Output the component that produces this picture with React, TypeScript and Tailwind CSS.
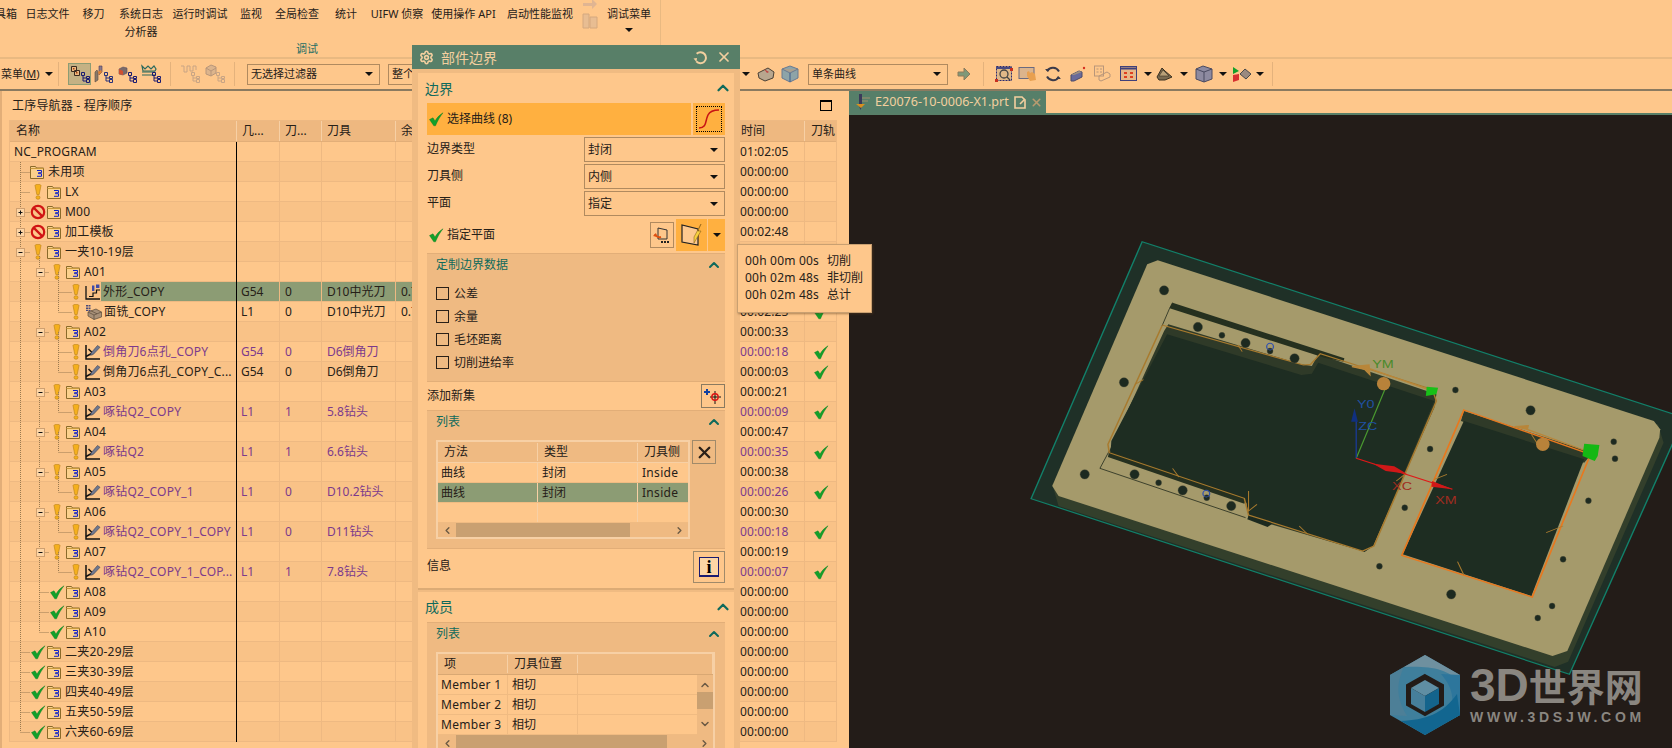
import React from "react";
import { ChevronUp, ChevronLeft, ChevronRight, ChevronDown, X, Settings } from "lucide-react";

const Folder = () => (
  <svg width="14" height="15" viewBox="0 0 14 15" className="shrink-0">
    <path d="M.5 2.5h5l1 1.5h7v10.5H.5z" fill="#fbd08c" stroke="#8a6a2a" />
    <path d="M.5 4.5h13" stroke="#c89a3c" />
    <path d="M7 6.5h4.5v2.2H8.5v1h3v2.6H7" fill="none" stroke="#1020c8" />
  </svg>
);
const Bang = () => (
  <svg width="16" height="16" viewBox="0 0 16 16" className="shrink-0">
    <path d="M5 1.5C5 0 11 0 11 1.5L9.2 10.5H6.8z" fill="#f5b01e" stroke="#b88010" strokeWidth=".6" />
    <ellipse cx="8" cy="13.5" rx="2" ry="1.8" fill="#f5b01e" stroke="#b88010" strokeWidth=".6" />
  </svg>
);
const Check = () => (
  <svg width="16" height="16" viewBox="0 0 16 16" className="shrink-0">
    <path d="M1.5 8.5 5 6.8l2 3.2C9 6.5 11.5 4 15 1.8 12 5.5 9.5 10 7.5 14.8H5.8z" fill="#12a02a" stroke="#0a7a1e" strokeWidth=".4" />
  </svg>
);
const NoEntry = () => (
  <svg width="16" height="16" viewBox="0 0 16 16" className="shrink-0">
    <circle cx="8" cy="8" r="6.2" fill="none" stroke="#d01414" strokeWidth="2.2" />
    <path d="M3.6 3.6l8.8 8.8" stroke="#d01414" strokeWidth="2.2" />
  </svg>
);
const OpEdit = () => (
  <svg width="16" height="16" viewBox="0 0 16 16" className="shrink-0">
    <path d="M1 1v14h14" fill="none" stroke="#111" strokeWidth="1.5" />
    <path d="M1 12.5 7.5 9 3.5 5" fill="none" stroke="#111" strokeWidth="1.5" />
    <path d="M6 9 12.5 1.5l2.5 1.8L8.2 10.5l-2.6.8z" fill="#6f7890" stroke="#3a3f50" strokeWidth=".6" />
  </svg>
);
const OpProfile = () => (
  <svg width="16" height="16" viewBox="0 0 16 16" className="shrink-0">
    <path d="M1 2v13h14" fill="none" stroke="#111" strokeWidth="1.3" />
    <path d="M4 12.5h4V9h3.5V6H15" fill="none" stroke="#111" strokeWidth="1.2" />
    <path d="M7 1.5h2.4v5.5H7zM11 .5h3.4v3.5H11z" fill="#3d4aa8" />
  </svg>
);
const OpFace = () => (
  <svg width="17" height="16" viewBox="0 0 17 16" className="shrink-0">
    <path d="M3 8l8-3 5.5 3v5L9 15.5 3 12z" fill="#a89078" stroke="#5a4a3a" strokeWidth=".7" />
    <path d="M3 8l6 3 7.5-3M9 11v4.5M6 6.8l6 3" fill="none" stroke="#5a4a3a" strokeWidth=".7" />
    <path d="M2 1v6M4.5 1v6" stroke="#4a4a7a" strokeWidth="2" strokeDasharray="1.6 .8" />
  </svg>
);

type Row = { n: string; l: number; s?: string; i: string; box?: string; g?: string; d?: string; t?: string; r?: string; time: string; p?: boolean; c?: boolean; sel?: boolean };
const rows: Row[] = [
  { n: "NC_PROGRAM", l: 0, i: "", time: "01:02:05" },
  { n: "未用项", l: 1, i: "f", time: "00:00:00" },
  { n: "LX", l: 1, s: "b", i: "f", time: "00:00:00" },
  { n: "M00", l: 1, s: "n", i: "f", box: "+", time: "00:00:00" },
  { n: "加工模板", l: 1, s: "n", i: "f", box: "+", time: "00:02:48" },
  { n: "一夹10-19层", l: 1, s: "b", i: "f", box: "-", time: "" },
  { n: "A01", l: 2, s: "b", i: "f", box: "-", time: "" },
  { n: "外形_COPY", l: 3, s: "b", i: "p", g: "G54", d: "0", t: "D10中光刀", r: "0.7", time: "", sel: true },
  { n: "面铣_COPY", l: 3, s: "b", i: "m", g: "L1", d: "0", t: "D10中光刀", r: "0.7", time: "00:02:23", c: true },
  { n: "A02", l: 2, s: "b", i: "f", box: "-", time: "00:00:33" },
  { n: "倒角刀6点孔_COPY", l: 3, s: "b", i: "e", g: "G54", d: "0", t: "D6倒角刀", time: "00:00:18", p: true, c: true },
  { n: "倒角刀6点孔_COPY_C...", l: 3, s: "b", i: "e", g: "G54", d: "0", t: "D6倒角刀", time: "00:00:03", c: true },
  { n: "A03", l: 2, s: "b", i: "f", box: "-", time: "00:00:21" },
  { n: "啄钻Q2_COPY", l: 3, s: "b", i: "e", g: "L1", d: "1", t: "5.8钻头", time: "00:00:09", p: true, c: true },
  { n: "A04", l: 2, s: "b", i: "f", box: "-", time: "00:00:47" },
  { n: "啄钻Q2", l: 3, s: "b", i: "e", g: "L1", d: "1", t: "6.6钻头", time: "00:00:35", p: true, c: true },
  { n: "A05", l: 2, s: "b", i: "f", box: "-", time: "00:00:38" },
  { n: "啄钻Q2_COPY_1", l: 3, s: "b", i: "e", g: "L1", d: "0", t: "D10.2钻头", time: "00:00:26", p: true, c: true },
  { n: "A06", l: 2, s: "b", i: "f", box: "-", time: "00:00:30" },
  { n: "啄钻Q2_COPY_1_COPY", l: 3, s: "b", i: "e", g: "L1", d: "0", t: "D11钻头", time: "00:00:18", p: true, c: true },
  { n: "A07", l: 2, s: "b", i: "f", box: "-", time: "00:00:19" },
  { n: "啄钻Q2_COPY_1_COP...", l: 3, s: "b", i: "e", g: "L1", d: "1", t: "7.8钻头", time: "00:00:07", p: true, c: true },
  { n: "A08", l: 2, s: "c", i: "f", time: "00:00:00" },
  { n: "A09", l: 2, s: "c", i: "f", time: "00:00:00" },
  { n: "A10", l: 2, s: "c", i: "f", time: "00:00:00" },
  { n: "二夹20-29层", l: 1, s: "c", i: "f", time: "00:00:00" },
  { n: "三夹30-39层", l: 1, s: "c", i: "f", time: "00:00:00" },
  { n: "四夹40-49层", l: 1, s: "c", i: "f", time: "00:00:00" },
  { n: "五夹50-59层", l: 1, s: "c", i: "f", time: "00:00:00" },
  { n: "六夹60-69层", l: 1, s: "c", i: "f", time: "00:00:00" },
];

const pad = ["pl-[4px]", "pl-[20px]", "pl-[39px]", "pl-[58px]"];

function TreeLines() {
  const cy = (i: number) => 10 + i * 20;
  const dot = "#9a7a50";
  const nodes: React.ReactNode[] = [];
  const xs = [0, 10.5, 29.5, 48.5];
  rows.forEach((r, i) => {
    if (r.l === 0) return;
    const end = r.l === 1 ? 20 : r.l === 2 ? 39 : 62;
    nodes.push(<line key={"h" + i} x1={xs[r.l]} x2={end} y1={cy(i) + 0.5} y2={cy(i) + 0.5} stroke={dot} strokeDasharray="1 1" />);
    if (r.l === 3) {
      let p = i;
      while (rows[p].l !== 2) p--;
      nodes.push(<line key={"v" + i} x1={48.5} x2={48.5} y1={cy(p)} y2={cy(i)} stroke={dot} strokeDasharray="1 1" />);
    }
  });
  rows.forEach((r, i) => {
    if (!r.box) return;
    const x = r.l === 1 ? 6 : 26;
    nodes.push(
      <g key={"b" + i}>
        <rect x={x + 0.5} y={cy(i) - 3.5} width="8" height="8" fill="#fdd5a5" stroke="#cfa070" />
        <path d={`M${x + 2.5} ${cy(i) + 0.5}h4` + (r.box === "+" ? `M${x + 4.5} ${cy(i) - 1.5}v4` : "")} stroke="#111" />
      </g>
    );
  });
  return (
    <svg width="227" height="620" className="absolute left-0 top-0 pointer-events-none">
      <line x1="10.5" x2="10.5" y1="20" y2={cy(29)} stroke={dot} strokeDasharray="1 1" />
      <line x1="29.5" x2="29.5" y1={cy(5) + 4} y2={cy(24)} stroke={dot} strokeDasharray="1 1" />
      {nodes}
    </svg>
  );
}

function Tree() {
  return (
    <div className="relative">
      <TreeLines />
      <div className="absolute left-[226px] top-0 bottom-0 w-[1px] bg-black z-10" />
      {rows.map((r, i) => {
        const col = r.p ? "text-[#7c3a8c]" : "text-[#262018]";
        const bg = i % 2 ? "bg-[#f9c287]" : "bg-[#fec78b]";
        const sel = r.sel ? "bg-[#8c9c74]" : "";
        return (
          <div key={i} className={`flex h-5 border-b border-[#eeb982] ${bg}`}>
            <div className={`w-[227px] shrink-0 flex items-center ${pad[r.l]}`}>
              {r.s === "b" && <span className="mr-[1px] flex"><Bang /></span>}
              {r.s === "n" && <span className="mr-[1px] flex"><NoEntry /></span>}
              {r.s === "c" && <span className="mr-[1px] flex"><Check /></span>}
              {r.i === "f" && <span className="mr-[4px] flex"><Folder /></span>}
              {r.i === "e" && <span className="flex"><OpEdit /></span>}
              {r.i === "p" && <span className="flex"><OpProfile /></span>}
              {r.i === "m" && <span className="flex"><OpFace /></span>}
              <span className={`flex-1 h-[19px] leading-[19px] whitespace-nowrap tracking-[0.2px] ${r.i !== "f" && r.l === 3 ? "pl-[2px]" : ""} ${col} ${sel}`}>{r.n}</span>
            </div>
            <div className={`w-[43px] shrink-0 border-r border-[#eeb982] pl-[4px] leading-[19px] ${col} ${sel}`}>{r.g}</div>
            <div className={`w-[42px] shrink-0 border-r border-[#eeb982] pl-[5px] leading-[19px] ${col} ${sel}`}>{r.d}</div>
            <div className={`w-[74px] shrink-0 border-r border-[#eeb982] pl-[5px] leading-[19px] whitespace-nowrap ${col} ${sel}`}>{r.t}</div>
            <div className={`w-[60px] shrink-0 border-r border-[#eeb982] pl-[5px] leading-[19px] ${col} ${sel}`}>{r.r}</div>
            <div className={`flex-1 border-r border-[#eeb982] ${sel}`} />
            <div className={`w-[70px] shrink-0 border-r border-[#eeb982] pl-[5px] tracking-[0.1px] leading-[19px] ${col} ${sel}`}>{r.time}</div>
            <div className={`w-[31px] shrink-0 flex items-center justify-center ${sel}`}>{r.c && <Check />}</div>
          </div>
        );
      })}
    </div>
  );
}

const TriDown = () => <span className="inline-block w-0 h-0 border-l-[4px] border-r-[4px] border-t-[4px] border-l-transparent border-r-transparent border-t-[#111]" />;

const Sel = ({ text, w, h = "h-[21px]" }: { text: string; w: string; h?: string }) => (
  <div className={`${w} ${h} shrink-0 border border-[#b08a5f] flex items-center justify-between pl-[3px] pr-[6px] text-[#262018] whitespace-nowrap overflow-hidden`}>
    <span>{text}</span>
    <TriDown />
  </div>
);

const Sep = ({ m }: { m: string }) => <div className={`w-[1px] h-6 bg-[#e4b27c] shrink-0 ${m}`} />;

const TB = ({ children, m = "" }: { children: React.ReactNode; m?: string }) => (
  <div className={`w-6 h-6 shrink-0 flex items-center justify-center ${m}`}>{children}</div>
);

const Branch = ({ c = "#1a1a70" }: { c?: string }) => (
  <path d="M11.5 8.5h3v3h-3zM16.5 15.5h3v3h-3zM13 11.5v5.5h3.5M13 14h3.5M16.5 12.5h3v2h-3z" fill="none" stroke={c} />
);

function Toolbar() {
  return (
    <div className="flex items-center h-[32px] border-b-2 border-[#8a7a60] text-[11px] text-[#262018]">
      <div className="w-[741px] shrink-0 flex items-center">
        <span className="ml-[1px] w-[42px] whitespace-nowrap">菜单(<span className="underline">M</span>)</span>
        <span className="ml-[2px] flex"><TriDown /></span>
        <Sep m="ml-[5px]" />
        <div className="ml-[9px] w-[23px] h-[22px] bg-[#c4b184] border border-[#8c9c74] flex items-center justify-center">
          <svg width="20" height="20" viewBox="0 0 20 20"><path d="M1.5 2.5h5v5h-5zM4.5 6.5h5v5h-5z" fill="#eeb880" stroke="#3a2a20" /><rect x="3" y="4" width="1.5" height="1.5" fill="#a04010" /><rect x="6" y="8" width="1.5" height="1.5" fill="#a04010" /><Branch /></svg>
        </div>
        <TB><svg width="20" height="20" viewBox="0 0 20 20"><path d="M2 8l2-2 1 2v8l-3 2z" fill="#8a7a6a" stroke="#5a4a40" strokeWidth=".6" /><path d="M6 2h3v6l-3 3z" fill="#8a7a8a" stroke="#4a3a5a" strokeWidth=".6" /><path d="M5 8l3-2 1 2-3 3z" fill="#e08030" /><Branch c="#27307a" /></svg></TB>
        <TB><svg width="20" height="20" viewBox="0 0 20 20"><path d="M2 5l4-2 4 1v5l-4 2-4-1z" fill="#7a6a6a" stroke="#5a5060" strokeWidth=".6" /><path d="M2 5l4 2v4l-4-1z" fill="#d05030" /><Branch /></svg></TB>
        <TB><svg width="20" height="20" viewBox="0 0 20 20"><path d="M1 2l3 3 3-3 3 3 3-3 2 3-1 2H2z" fill="none" stroke="#2d6a5e" strokeWidth="1.2" /><path d="M1 8h13M1 11h13" stroke="#2d6a5e" strokeWidth="1.2" /><Branch /></svg></TB>
        <Sep m="ml-[7px]" />
        <TB m="ml-[7px]"><svg width="20" height="20" viewBox="0 0 20 20"><path d="M1 2h3v6h3V2h3v5h3V2h3v4" fill="none" stroke="#c8a484" /><Branch c="#c8a484" /></svg></TB>
        <TB m="ml-[1px]"><svg width="20" height="20" viewBox="0 0 20 20"><path d="M1 4l5-3 5 2v6l-5 3-5-2z" fill="#dcb48c" stroke="#b8967a" /><path d="M1 4l5 3 5-3M6 7v5" fill="none" stroke="#b8967a" /><Branch c="#c8a484" /></svg></TB>
        <Sep m="ml-[7px]" />
        <div className="ml-[12px]"><Sel text="无选择过滤器" w="w-[133px]" /></div>
        <div className="ml-[8px]"><Sel text="整个装配" w="w-[100px]" /></div>
      </div>
      <div className="flex items-center">
        <span className="ml-[1px] flex"><TriDown /></span>
        <TB m="ml-[4px]"><svg width="18" height="16" viewBox="0 0 18 16"><path d="M1 7l10-5 6 4-1 6-8 3-6-3z" fill="#b8a68e" stroke="#4a4035" /><path d="M7 3l5 3-2 1z" fill="#c04040" /></svg></TB>
        <TB><svg width="18" height="18" viewBox="0 0 18 18"><path d="M9 1l8 3v9l-8 4-8-4V4z" fill="#8ea4a8" stroke="#6a7a90" /><path d="M1 4l8 4 8-4" fill="#a8a090" stroke="#6a7a90" /><path d="M9 8v9" stroke="#3a5a8a" /></svg></TB>
        <div className="ml-[6px]"><Sel text="单条曲线" w="w-[140px]" /></div>
        <div className="ml-[6px] w-5 flex justify-center"><svg width="14" height="14" viewBox="0 0 14 14"><path d="M1 5h6V1l6 6-6 6V9H1z" fill="#7f9878" stroke="#8c7a5c" /></svg></div>
        <Sep m="ml-[9px]" />
        <TB m="ml-[8px]"><svg width="18" height="18" viewBox="0 0 18 18"><rect x="1.5" y="1.5" width="15" height="14" fill="#e0b888" stroke="#2a2a70" strokeDasharray="2 1" /><path d="M1 2h16v2H1z" fill="#4a4a80" /><circle cx="9" cy="9" r="4" fill="none" stroke="#444" strokeWidth="1.3" /><path d="M12 12l3 3" stroke="#444" strokeWidth="1.3" /><rect x="0" y="14" width="3" height="3" fill="#c83020" /><rect x="15" y="3" width="3" height="3" fill="#c83020" /></svg></TB>
        <TB><svg width="20" height="16" viewBox="0 0 20 16"><rect x="1" y="1.5" width="15" height="11" fill="#dcb48c" stroke="#6a6a80" /><path d="M9 6l2-1 1 2 2-1 3 2 1 6-6 1-3-5z" fill="#e8a050" /></svg></TB>
        <TB m="ml-[1px]"><svg width="18" height="18" viewBox="0 0 18 18"><path d="M15 6.5A7 7 0 0 0 3 6M3 11.5a7 7 0 0 0 12 .5" fill="none" stroke="#3a3a4a" strokeWidth="2" /><path d="M1 4l3 3 2-3zM17 14l-3-3-2 3z" fill="#3a3a4a" /></svg></TB>
        <TB m="ml-[1px]"><svg width="18" height="16" viewBox="0 0 18 16"><path d="M2 9l8-4 3 1v5l-8 4H2z" fill="#6a6a9a" stroke="#4a4a6a" /><path d="M10 5l3 1-8 3-3 0z" fill="#a09080" /><circle cx="15" cy="2" r="1.2" fill="#d83020" /></svg></TB>
        <TB><svg width="18" height="18" viewBox="0 0 18 18"><rect x="1.5" y="1" width="9" height="10" fill="none" stroke="#b8967a" /><path d="M3.5 4h2M3.5 7h2M7 4h2M7 7h2" stroke="#b8967a" /><path d="M6 11l8-4 3 2v3l-9 4-2-1z" fill="none" stroke="#b8967a" /></svg></TB>
        <TB m="ml-[3px]"><svg width="18" height="16" viewBox="0 0 18 16"><rect x=".5" y=".5" width="16" height="14" fill="#e8b888" stroke="#40407a" /><path d="M.5 2.5h16" stroke="#40407a" strokeWidth="2" /><path d="M4 6h3v2H4zM10 6h3v2h-3zM4 10h3v2H4zM10 10h3v2h-3z" fill="#e04020" /></svg></TB>
        <span className="ml-[1px] w-[11px] flex justify-center"><TriDown /></span>
        <TB><svg width="18" height="16" viewBox="0 0 18 16"><path d="M1 11l5-9 3 3 7 6-7 3-6 0z" fill="#7a6a50" stroke="#3a3020" /><path d="M3 10l4-6 6 6z" fill="#b8a078" stroke="#3a3020" strokeWidth=".6" /></svg></TB>
        <span className="ml-[1px] w-[11px] flex justify-center"><TriDown /></span>
        <TB m="ml-[3px]"><svg width="18" height="18" viewBox="0 0 18 18"><path d="M1 4l7-3 9 3v10l-8 3-8-3z" fill="#8d8aa0" stroke="#4a4a60" /><path d="M1 4l8 3 8-3M9 7v10" fill="none" stroke="#4a4a60" /></svg></TB>
        <span className="ml-[1px] w-[11px] flex justify-center"><TriDown /></span>
        <TB m="ml-[2px]"><svg width="20" height="18" viewBox="0 0 20 18"><path d="M1 2l6 4-6 3z" fill="#14a02a" /><path d="M1 10l6-1v6l-6 2z" fill="#d83030" /><path d="M8 9l5-5 6 5-5 5z" fill="#9a8a80" stroke="#4a4a4a" /></svg></TB>
        <span className="w-[11px] flex justify-center"><TriDown /></span>
        <Sep m="ml-[7px]" />
      </div>
    </div>
  );
}

function Ribbon() {
  const items: [string, string, string?][] = [
    ["w-[61px]", "日志文件"],
    ["w-[31px]", "移刀"],
    ["w-[64px]", "系统日志", "分析器"],
    ["w-[54px]", "运行时调试"],
    ["w-[48px]", "监视"],
    ["w-[44px]", "全局检查"],
    ["w-[54px]", "统计"],
    ["w-[48px]", "UIFW 侦察"],
  ];
  return (
    <div className="h-[59px] border-b-2 border-[#e9b981] flex text-[11px] text-[#262018]">
      <div className="w-[661px] border-r border-[#e9b981] shrink-0 flex flex-col">
        <div className="flex h-[44px] pt-[5px] leading-[18px] whitespace-nowrap">
          <div className="w-[17px] flex justify-end overflow-hidden"><span>工具箱</span></div>
          {items.map(([w, a, b], i) => (
            <div key={i} className={`${w} shrink-0 flex flex-col items-center`}>
              <span>{a}</span>
              {b && <span>{b}</span>}
            </div>
          ))}
          <div className="w-[77px] ml-[4px] text-center">使用操作 API</div>
          <div className="w-[72px] ml-[2px] text-center">启动性能监视</div>
          <div className="w-[28px] flex flex-col items-center -mt-[6px] gap-[1px]">
            <svg width="16" height="12" viewBox="0 0 16 12"><path d="M1 4h9V0l5 5-5 5V7H1z" fill="#e0b592" /></svg>
            <svg width="16" height="17" viewBox="0 0 16 17"><path d="M1 2h6v14H1zM8 5h7v11H8z" fill="#e8bd92" stroke="#d4a87e" /></svg>
          </div>
          <div className="w-[48px] ml-[1px] flex flex-col items-center">
            <span>调试菜单</span>
            <span className="mt-[5px] flex"><TriDown /></span>
          </div>
        </div>
        <div className="w-[614px] text-center text-[#1f6e64] leading-[12px] -mt-[1px]">调试</div>
      </div>
    </div>
  );
}

const GroupHead = ({ t }: { t: string }) => (
  <div className="flex items-center justify-between h-[22px] pl-[9px] pr-[3px] text-[#0f6a5c]">
    <span>{t}</span>
    <ChevronUp size={16} strokeWidth={3} className="text-[#0f6a5c]" />
  </div>
);

const Cb = ({ t }: { t: string }) => (
  <div className="flex items-center h-[23px] pl-[9px] gap-[5px] text-[#262018]">
    <span className="w-[13px] h-[13px] border border-[#2a2018]" />
    <span>{t}</span>
  </div>
);

const DRow = ({ label, val }: { label: string; val: string }) => (
  <div className="flex items-center justify-between h-[27px] pl-[9px] pr-[9px]">
    <span className="-mt-[1px]">{label}</span>
    <Sel text={val} w="w-[141px]" h="h-[25px]" />
  </div>
);

const HScroll = ({ thumb }: { thumb: string }) => (
  <div className="flex items-center h-[16px] bg-[#efba82] text-[#6b5a44]">
    <span className="w-[18px] flex justify-center"><ChevronLeft size={11} strokeWidth={3} /></span>
    <div className="flex-1 h-full"><div className={`h-full bg-[#c9a071] ${thumb}`} /></div>
    <span className="w-[18px] flex justify-center"><ChevronRight size={11} strokeWidth={3} /></span>
  </div>
);

function Dialog() {
  const cols = "w-[100px] shrink-0 border-r border-[#f7d0a5]";
  return (
    <div className="absolute left-[412px] top-[45px] w-[328px] h-[703px] bg-[#f0bb82] overflow-hidden text-[12px] text-[#262018]">
      <div className="h-6 bg-[#587f68] flex items-center pl-[7px] pr-[8px] text-[#f3cf9f]">
        <Settings size={15} strokeWidth={2.6} />
        <span className="ml-[7px] text-[14px] flex-1">部件边界</span>
        <svg width="15" height="15" viewBox="0 0 15 15" className="mr-[8px]"><path d="M4 3.5 A5.5 5.5 0 1 1 3 11" fill="none" stroke="#f3cf9f" strokeWidth="2" transform="rotate(-5 7.5 7.5)" /><path d="M0.5 8.5 4 8l-.5 4z" fill="#f3cf9f" /></svg>
        <X size={16} strokeWidth={2.6} />
      </div>
      <div className="mx-[6px] mt-[4px] h-[517px] bg-[#fec78b] border-b-2 border-[#dcab75]">
        <div className="flex items-center justify-between h-[30px] pl-[7px] pr-[2px] text-[14px] text-[#0f6a5c]">
          <span>边界</span>
          <ChevronUp size={18} strokeWidth={3} />
        </div>
        <div className="flex h-[32px] ml-[9px] mr-[9px] gap-[2px]">
          <div className="flex-1 bg-[#ffb040] flex items-center pl-[1px] gap-[3px]">
            <Check />
            <span>选择曲线 (8)</span>
          </div>
          <div className="w-[32px] bg-[#ffb040] flex items-center justify-center">
            <div className="w-[26px] h-[26px] border border-dotted border-black flex items-center justify-center">
              <svg width="22" height="22" viewBox="0 0 22 22"><path d="M1 20c8 0 6-7 9-13 2-4 5-5 11-5" fill="none" stroke="#c81414" strokeWidth="1.6" /></svg>
            </div>
          </div>
        </div>
        <div className="mt-[1px]">
          <DRow label="边界类型" val="封闭" />
          <DRow label="刀具侧" val="内侧" />
          <DRow label="平面" val="指定" />
        </div>
        <div className="flex items-center h-[32px] ml-[9px] mr-[9px] mt-[2px]">
          <div className="flex-1 flex items-center pl-[1px] gap-[3px]"><Check /><span>指定平面</span></div>
          <div className="w-[24px] h-[26px] border border-[#b08a5f] flex items-center justify-center">
            <svg width="20" height="20" viewBox="0 0 20 20"><path d="M6 3l9 2v9H6z" fill="none" stroke="#333" /><path d="M9 12a5 5 0 0 1-6-3" fill="none" stroke="#e05010" strokeWidth="2" /><path d="M1 11l3-3 1 4z" fill="#e05010" /><path d="M9 16h2v2H9zM12 16h2v2h-2zM15 16h2v2h-2z" fill="#222" /></svg>
          </div>
          <div className="ml-[2px] w-[31px] h-[32px] bg-[#ffb040] flex items-center justify-center">
            <svg width="24" height="24" viewBox="0 0 24 24"><path d="M2 2v17l16 3V6z" fill="#fdc98f" stroke="#222" strokeWidth="1.2" /><path d="M14 14 21 1l-3 7h3l-7 12z" fill="#f6d040" stroke="#7a5010" strokeWidth=".5" /></svg>
          </div>
          <div className="ml-[1px] w-[17px] h-[32px] bg-[#ffb040] flex items-center justify-center"><TriDown /></div>
        </div>
        <div className="mt-[2px] mx-[9px] h-[129px] bg-[#efba82] border-t border-b border-[#e2ae78]">
          <GroupHead t="定制边界数据" />
          <div className="mt-[6px]">
            <Cb t="公差" />
            <Cb t="余量" />
            <Cb t="毛坯距离" />
            <Cb t="切削进给率" />
          </div>
        </div>
        <div className="flex items-center justify-between h-[28px] pl-[9px] pr-[9px]">
          <span>添加新集</span>
          <div className="w-[24px] h-[24px] border border-[#8a7a60] flex items-center justify-center">
            <svg width="18" height="18" viewBox="0 0 18 18"><path d="M3 2v6M0 5h6" stroke="#1040a0" strokeWidth="2" /><path d="M11 4v13M6 10h11" stroke="#111" /><circle cx="11" cy="10" r="3.2" fill="none" stroke="#e01414" strokeWidth="1.4" /></svg>
          </div>
        </div>
        <div className="mx-[9px] h-[139px] bg-[#efba82] border-t border-b border-[#e2ae78]">
          <GroupHead t="列表" />
          <div className="flex mt-[7px] ml-[9px] gap-[2px]">
            <div className="w-[254px] h-[99px] border-2 border-[#f7d0a5] flex flex-col overflow-hidden">
              <div className="flex h-[21px] shrink-0 border-b border-[#f7d0a5] bg-[#efba82] items-center">
                <div className={`${cols} pl-[6px]`}>方法</div>
                <div className={`${cols} pl-[6px]`}>类型</div>
                <div className="flex-1 pl-[6px] whitespace-nowrap">刀具侧</div>
              </div>
              {[["曲线", "封闭", "Inside", 0], ["曲线", "封闭", "Inside", 1], ["", "", "", 0]].map((r, i) => (
                <div key={i} className={`flex h-5 shrink-0 border-b border-[#f0bb82] ${r[3] ? "bg-[#8c9c74]" : "bg-[#fec78b]"}`}>
                  <div className={`${cols} pl-[3px] leading-[19px]`}>{r[0]}</div>
                  <div className={`${cols} pl-[4px] leading-[19px]`}>{r[1]}</div>
                  <div className="flex-1 pl-[4px] leading-[19px] tracking-[0.3px]">{r[2]}</div>
                </div>
              ))}
              <HScroll thumb="w-[174px]" />
            </div>
            <div className="w-[24px] h-[24px] border border-[#a08a6a] flex items-center justify-center">
              <X size={19} strokeWidth={3} className="text-[#2a2018]" />
            </div>
          </div>
        </div>
        <div className="flex items-center justify-between h-[32px] mt-[2px] pl-[9px] pr-[9px]">
          <span className="-mt-[2px]">信息</span>
          <div className="w-[32px] h-[32px] border border-[#a08a6a] flex items-center justify-center">
            <div className="w-[20px] h-[20px] border border-[#1a1a70] bg-[#fdd5a5] border-b-2 flex items-center justify-center font-['Liberation_Serif',serif] font-bold text-[18px] leading-none text-black">i</div>
          </div>
        </div>
      </div>
      <div className="mx-[6px] mt-[2px] h-[200px] bg-[#fec78b]">
        <div className="flex items-center justify-between h-[30px] pl-[7px] pr-[2px] text-[14px] text-[#0f6a5c]">
          <span className="-mt-[1px]">成员</span>
          <ChevronUp size={18} strokeWidth={3} />
        </div>
        <div className="mx-[9px] h-[170px] bg-[#efba82] border-t border-[#e2ae78]">
          <GroupHead t="列表" />
          <div className="ml-[9px] mt-[7px] w-[279px] border-2 border-[#f7d0a5]">
            <div className="flex h-[21px] border-b border-[#d9a873] items-center">
              <div className="w-[70px] shrink-0 border-r border-[#f7d0a5] pl-[6px]">项</div>
              <div className="w-[70px] shrink-0 border-r border-[#f7d0a5] pl-[6px]">刀具位置</div>
              <div className="flex-1 border-r border-[#f7d0a5] h-full" />
            </div>
            <div className="flex">
              <div className="w-[259px]">
                {["Member 1", "Member 2", "Member 3"].map((m) => (
                  <div key={m} className="flex h-5 bg-[#fec78b] border-b border-[#f0bb82]">
                    <div className="w-[70px] shrink-0 border-r border-[#f0bb82] pl-[3px] leading-[19px] tracking-[0.3px]">{m}</div>
                    <div className="w-[70px] shrink-0 border-r border-[#f0bb82] pl-[4px] leading-[19px]">相切</div>
                  </div>
                ))}
              </div>
              <div className="flex-1 flex flex-col items-center text-[#6b5a44] pt-[4px]">
                <ChevronUp size={12} strokeWidth={3} />
                <div className="w-full h-[17px] bg-[#c9a071] my-[1px]" />
                <ChevronDown size={12} strokeWidth={3} className="mt-[8px]" />
              </div>
            </div>
            <HScroll thumb="w-[211px]" />
          </div>
        </div>
      </div>
    </div>
  );
}

function Tooltip() {
  const lines = [["00h 00m 00s", "切削"], ["00h 02m 48s", "非切削"], ["00h 02m 48s", "总计"]];
  return (
    <div className="absolute left-[737px] top-[244px] w-[135px] h-[69px] bg-[#fec78b] border border-[#c9a071] shadow-[1px_1px_2px_rgba(90,60,30,0.5)] pl-[7px] pt-[7px] text-[12px] leading-[17px] text-[#262018] whitespace-nowrap">
      {lines.map(([a, b]) => (
        <div key={a + b} className="flex">
          <span className="w-[82px] tracking-[0.2px]">{a}</span>
          <span>{b}</span>
        </div>
      ))}
    </div>
  );
}

const Hole = ({ x, y, r = 11 }: { x: number; y: number; r?: number }) => <ellipse cx={x} cy={y} rx={r} ry={r * 1.27} fill="#1d2a20" stroke="#4a4a38" strokeWidth="1" />;

function Model() {
  const big: [number, number][] = [[365, 208], [270, 484], [177, 760], [1233, 568], [1045, 1120], [445, 318], [558, 366], [674, 412], [295, 760], [409, 808], [524, 855]];
  const small: [number, number][] = [[1055, 507], [995, 684], [935, 860], [875, 1036], [1430, 662], [1433, 713], [1370, 839], [1310, 1015], [1284, 1155], [1250, 1191], [502, 343], [616, 390], [352, 785], [466, 830]];
  const line = "#a87a2e";
  return (
    <svg viewBox="0 0 1568 1440" width="662" height="480" preserveAspectRatio="none" className="absolute left-[161px] top-[106px] overflow-hidden">
      <polygon points="313,62 1597,590 1325,1360 50,833" fill="#1f3027" stroke="#12806a" strokeWidth="3.5" />
      <polygon points="100,790 115,855 1290,1338 1322,1322 1548,665 1535,610" fill="#333f2b" />
      <polygon points="350,118 1525,600 1540,625 1538,650 1320,1290 1285,1305 115,825 100,795 325,130" fill="#a59a6b" />
      <polygon points="375,310 690,430 715,435 730,400 1010,520 1005,560 860,975 840,992 565,890 560,835 235,690 365,330" fill="#2f3a28" />
      <polygon points="372,340 690,462 715,458 730,425 1005,540 860,975 840,992 565,885 560,845 238,698 240,660" fill="#1e2d22" />
      <polygon points="385,245 378,262 745,410 790,422 792,412" fill="#25301f" />
      <polygon points="235,690 232,708 555,848 560,832" fill="#25301f" />
      <polygon points="565,885 562,895 610,918 625,905" fill="#1c2a1f" />
      <path d="M385 245L378 262 360 315M235 690 213 742 558 890" fill="none" stroke="#1a2418" strokeWidth="2" />
      <polygon points="1075,570 1380,695 1360,725 1068,600" fill="#2f3a28" />
      <polygon points="1075,600 1360,715 1235,1125 930,1000" fill="#1e2d22" />
      <path d="M1075 567L1375 700 1237 1128 928 1003z" fill="none" stroke="#e8781e" strokeWidth="4" />
      <path d="M360 312L695 432 712 430 735 398 1000 505 1010 540 862 975 835 990 565 882 555 832 235 695 232 670 360 315" fill="none" stroke={line} strokeWidth="3.5" />
      <path d="M296 490l20-14M540 372l10 20M385 742l15 26M565 810v60l20-20M685 915l20 25M915 780l20-20M1005 775l30-15M1270 935l40-20M1060 1022l15 40M1235 640l20 40" fill="none" stroke={line} strokeWidth="2.5" />
      {big.map(([x, y], i) => <Hole key={i} x={x} y={y} />)}
      {small.map(([x, y], i) => <Hole key={"s" + i} x={x} y={y} r={7} />)}
      <ellipse cx="616" cy="377" rx="8" ry="10" fill="none" stroke="#3050b0" strokeWidth="3" />
      <ellipse cx="465" cy="818" rx="8" ry="10" fill="none" stroke="#3050b0" strokeWidth="3" />
      <path d="M820 712L888 505" stroke="#4a9a30" strokeWidth="3" />
      <path d="M820 712V600" stroke="#1a3a9a" strokeWidth="3" />
      <path d="M816 562l8 40h-16z" fill="#103080" />
      <path d="M820 712L1048 805" stroke="#e01818" strokeWidth="3" />
      <path d="M860 728l50 8 30 22-50-8z" fill="#d01818" />
      <path d="M1000 780l48 25-50-8z" fill="#d01818" />
      <path d="M840 445l-30-8 40-5 2 28zM850 442L990 505" fill="#b8863a" stroke="#b8863a" strokeWidth="4" />
      <path d="M1225 625l-30-8 32-3zM1225 625L1365 690" fill="#b8863a" stroke="#b8863a" strokeWidth="4" />
      <ellipse cx="885" cy="488" rx="16" ry="20" fill="#b8823a" />
      <ellipse cx="1262" cy="670" rx="16" ry="20" fill="#b8823a" />
      <polygon points="987,497 1014,500 1010,520 985,525" fill="#18c018" />
      <polygon points="1360,668 1396,672 1392,705 1385,720 1356,705" fill="#14b814" />
      <g fontFamily="'Liberation Sans',sans-serif" fontSize="34">
        <text x="858" y="442" fill="#4a8a2c">YM</text>
        <text x="822" y="562" fill="#2050a0">Y0</text>
        <text x="825" y="628" fill="#2050a0">ZC</text>
        <text x="905" y="806" fill="#a02c20">XC</text>
        <text x="1007" y="850" fill="#a02c20">XM</text>
      </g>
    </svg>
  );
}

function Logo() {
  return (
    <div className="absolute left-[540px] top-[539px] flex items-center text-[#8a8680]">
      <svg width="72" height="82" viewBox="0 0 72 82" className="shrink-0">
        <polygon points="36,1 71,21 71,61 36,81 1,61 1,21" fill="#3f7f9c" />
        <path d="M36 1 71 21V30C60 14 40 12 15 13z" fill="#6f909f" />
        <path d="M71 21V61L58 68C66 50 66 36 52 20z" fill="#2d769c" />
        <path d="M71 61 36 81 12 67C36 66 54 60 68 40z" fill="#126690" />
        <path d="M1 21 15 13C8 28 6 42 18 62L1 61z" fill="#4d7f97" />
        <polygon points="36,21 54,31 54,51 36,61 18,51 18,31" fill="#231c18" stroke="#231c18" strokeWidth="2" />
        <polygon points="36,26 50,34 36,42 22,34" fill="#5f8ea3" />
        <polygon points="22,34 36,42 36,58 22,50" fill="#467f9b" />
        <polygon points="50,34 36,42 36,58 50,50" fill="#14648c" />
      </svg>
      <div className="ml-[9px] flex flex-col font-['Liberation_Sans','Noto_Sans_CJK_SC',sans-serif] font-bold">
        <div className="flex items-center h-[38px] whitespace-nowrap">
          <span className="text-[46px] leading-none">3D</span>
          <span className="text-[38px] leading-none font-['Noto_Sans_CJK_SC',sans-serif] font-bold">世界网</span>
        </div>
        <div className="mt-[6px] text-[14px] leading-none tracking-[3.7px] whitespace-nowrap">WWW.3DSJW.COM</div>
      </div>
    </div>
  );
}

export default function App() {
  return (
    <div className="relative w-[1672px] h-[748px] overflow-hidden bg-[#fec78b] font-['Noto_Sans','Noto_Sans_CJK_SC',sans-serif] text-[12px]">
      <Ribbon />
      <Toolbar />
      <div className="flex h-[657px]">
        <div className="w-[849px] shrink-0 border-l-2 border-[#e2ae78] overflow-hidden">
          <div className="flex items-center justify-between h-[29px] pl-[10px] pr-[17px] text-[12px] text-[#262018]">
            <span className="tracking-[0.2px]">工序导航器 - 程序顺序</span>
            <span className="w-3 h-[11px] border border-black border-t-2" />
          </div>
          <div className="ml-[7px] w-[828px] border-l border-r border-t border-[#eeb982]">
            <div className="flex h-[21px] bg-[#eeb880] text-[#262018] border-b border-[#e2ae78] leading-[20px]">
              <div className="w-[227px] shrink-0 border-r border-[#f7d0a5] pl-[6px]">名称</div>
              <div className="w-[43px] shrink-0 border-r border-[#f7d0a5] pl-[5px]">几...</div>
              <div className="w-[42px] shrink-0 border-r border-[#f7d0a5] pl-[5px]">刀...</div>
              <div className="w-[74px] shrink-0 border-r border-[#f7d0a5] pl-[5px]">刀具</div>
              <div className="w-[60px] shrink-0 border-r border-[#f7d0a5] pl-[5px]">余</div>
              <div className="flex-1 border-r border-[#f7d0a5]" />
              <div className="w-[70px] shrink-0 border-r border-[#f7d0a5] pl-[6px]">时间</div>
              <div className="w-[31px] shrink-0 pl-[6px] whitespace-nowrap overflow-hidden">刀轨</div>
            </div>
            <Tree />
          </div>
        </div>
        <div className="flex-1 flex flex-col min-w-0">
          <div className="h-[24px] shrink-0 border-b-2 border-[#587f68]">
            <div className="w-[197px] h-[22px] bg-[#567f69] flex items-center pl-[6px] text-[12.6px] text-[#f3cf9f] whitespace-nowrap">
              <svg width="16" height="18" viewBox="0 0 16 18" className="shrink-0"><path d="M4 1h3v12l-1.5 4L4 13z" fill="#3a3a5a" /><path d="M7 5h8M7 8h6" stroke="#a09070" /><path d="M1 11h9l-4 4z" fill="#d89020" /></svg>
              <span className="ml-[4px]">E20076-10-0006-X1.prt</span>
              <svg width="13" height="13" viewBox="0 0 13 13" className="ml-[5px] shrink-0"><path d="M1 1h7l3 3v8H1z" fill="none" stroke="#f3cf9f" strokeWidth="1.6" /><path d="M6 8l5-5" stroke="#f3cf9f" strokeWidth="1.6" /></svg>
              <X size={13} strokeWidth={3} className="ml-[3px] text-[#b99b70]" />
            </div>
          </div>
          <div className="flex-1 bg-[#231c18] relative">
            <Model />
            <Logo />
          </div>
        </div>
      </div>
      <Dialog />
      <Tooltip />
    </div>
  );
}
